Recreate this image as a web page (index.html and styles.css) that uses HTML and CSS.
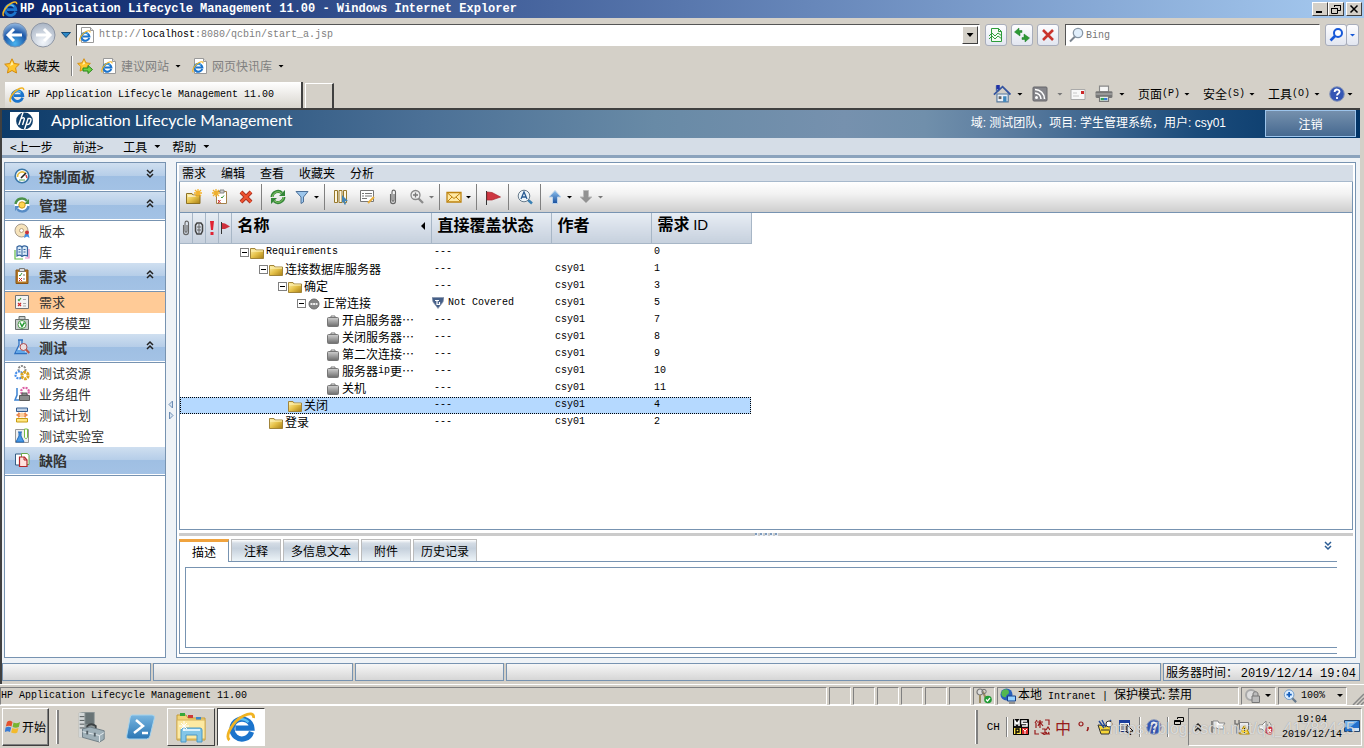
FILE: index.html
```html
<!DOCTYPE html>
<html lang="zh-CN">
<head>
<meta charset="utf-8">
<title>HP Application Lifecycle Management 11.00</title>
<link rel="stylesheet" href="styles.css">
</head>
<body>
<svg class="defs" aria-hidden="true">
  <defs>
    <linearGradient id="gFolder" x1="0" y1="0" x2="1" y2="1"><stop offset="0" stop-color="#fff3b0"/><stop offset=".5" stop-color="#e6c24a"/><stop offset="1" stop-color="#a87f14"/></linearGradient>
    <linearGradient id="gGrey" x1="0" y1="0" x2="0" y2="1"><stop offset="0" stop-color="#d0d0d0"/><stop offset="1" stop-color="#6c6c6c"/></linearGradient>
    <linearGradient id="gBlue" x1="0" y1="0" x2="0" y2="1"><stop offset="0" stop-color="#8fc3f0"/><stop offset="1" stop-color="#174e9c"/></linearGradient>
    <linearGradient id="gPs" x1="0" y1="0" x2="0" y2="1"><stop offset="0" stop-color="#79b6e0"/><stop offset="1" stop-color="#2a76b4"/></linearGradient>
    <radialGradient id="gBack" cx=".5" cy=".85" r=".8"><stop offset="0" stop-color="#4ab4f0"/><stop offset=".6" stop-color="#1d58a8"/><stop offset="1" stop-color="#88b0dc"/></radialGradient>
    <radialGradient id="gFwd" cx=".5" cy=".8" r=".8"><stop offset="0" stop-color="#f2f6fb"/><stop offset="1" stop-color="#a9b4c4"/></radialGradient>
    <symbol id="ie" viewBox="0 0 16 16"><path d="M13.6 10.6A5.3 5.3 0 1 1 13.8 8.6H5" fill="none" stroke="#1b74cc" stroke-width="2.8"/><path d="M4 6.5a4.800 4.800 0 0 1 8-1" fill="none" stroke="#5cc0f2" stroke-width="1.200"/><path d="M1.800 15C-.8 12.500 4 4.500 9.500 2c3-1.500 5.500-1.500 5.200 1.200" fill="none" stroke="#f0b323" stroke-width="1.500"/></symbol>
    <symbol id="iepage" viewBox="0 0 16 16"><path d="M2.500.5h9l3 3v12h-12z" fill="#fff" stroke="#9a9a9a"/><path d="M11.500.5v3h3" fill="#ddd" stroke="#9a9a9a"/><use href="#ie" x="0" y="3" width="12" height="12"/></symbol>
    <symbol id="star" viewBox="0 0 16 16"><path d="M8 .8l2.200 4.700 5.100.7-3.700 3.600.9 5.200L8 12.500 3.500 15l.9-5.200L.7 6.200l5.100-.7z" fill="#ffc62e" stroke="#d48a0c"/><path d="M8 3l1.300 3.500L6 8z" fill="#fff0a8"/></symbol>
    <symbol id="starplus" viewBox="0 0 16 16"><use href="#star" width="14" height="14"/><path d="M6 10h5V7.500l4.500 4-4.500 4V13H6z" fill="#6dcf45" stroke="#278a1a"/></symbol>
    <symbol id="compat" viewBox="0 0 16 16"><path d="M3.500 1.500h7l3 3v10h-10z" fill="#f3fbf3" stroke="#2d9c3a"/><path d="M10.500 1.500v3h3M1 9l3-3 3 3 3-3 4 3M1 12l3-3 3 3 3-3 4 3" fill="none" stroke="#2d9c3a"/></symbol>
    <symbol id="reload" viewBox="0 0 16 16"><path d="M.5 5L5 1v2.500h3v2H6V9zM15.500 11L11 15v-2.500H8v-2h2V7z" fill="#2d9a34" stroke="#1e7a28" stroke-width=".5"/></symbol>
    <symbol id="cross" viewBox="0 0 16 16"><path d="M3 3l10 10M13 3L3 13" stroke="#a83020" stroke-width="4"/><path d="M3 3l10 10M13 3L3 13" stroke="#ee5230" stroke-width="2.400"/></symbol>
    <symbol id="stop" viewBox="0 0 16 16"><path d="M3 3l10 10M13 3L3 13" stroke="#c9332c" stroke-width="2.600"/></symbol>
    <symbol id="mag" viewBox="0 0 16 16"><path d="M7 9.500L2 14.500" stroke="#7b8590" stroke-width="2"/><circle cx="10" cy="6" r="4.700" fill="#e1effc" stroke="#8796a5" stroke-width="1.300"/></symbol>
    <symbol id="magb" viewBox="0 0 16 16"><path d="M7 9L2.500 13.500" stroke="#1658d8" stroke-width="2.600"/><circle cx="10" cy="6" r="4" fill="#fff" stroke="#1658d8" stroke-width="2"/></symbol>
    <symbol id="home" viewBox="0 0 16 16"><path d="M3 1h2v4H3zM3.500 8h10v7h-10z" fill="#e9f0f8" stroke="#56799c"/><path d="M.8 8.500L8.500 1.500l7 7" fill="none" stroke="#3555a0" stroke-width="1.600"/><path d="M9 10h3v5H9z" fill="#3e87bc"/><path d="M5 10h2.500v2.500H5z" fill="#656565"/><path d="M3 0h3v4H3z" fill="#2131a8"/></symbol>
    <symbol id="rss" viewBox="0 0 16 16"><rect x="1" y="1" width="14" height="14" rx="1" fill="#85858a" stroke="#66666b"/><circle cx="4.500" cy="11.500" r="1.500" fill="#fff"/><path d="M3 7a6 6 0 0 1 6 6M3 3.500A9.500 9.500 0 0 1 12.500 13" fill="none" stroke="#fff" stroke-width="1.600"/></symbol>
    <symbol id="mailr" viewBox="0 0 16 16"><path d="M1 3.500h14v10H1z" fill="#f8f8f8" stroke="#aaa"/><path d="M11 5h3v3h-3z" fill="#cc2929"/><path d="M3 7h4M3 10h6" stroke="#c8c8c8"/></symbol>
    <symbol id="printer" viewBox="0 0 16 16"><path d="M4 1h8v5H4z" fill="#f6f6f6" stroke="#888"/><rect x=".5" y="5.500" width="15" height="6" rx="1" fill="#777"/><path d="M1 8h14" stroke="#b2b2b2"/><path d="M4 10h8v4.500H4z" fill="#eff7ef" stroke="#777"/><path d="M5 12.500h3" stroke="#32a05d" stroke-width="2"/><path d="M8 12.500h3" stroke="#3778d4" stroke-width="2"/></symbol>
    <symbol id="help" viewBox="0 0 16 16"><circle cx="8" cy="8" r="7.300" fill="#3456b4" stroke="#8796b8"/><path d="M5.600 6c.2-3.500 5-3 4.900-.3C10.400 7.500 8 7.400 8 9.600M8 11v2" fill="none" stroke="#fff" stroke-width="1.800"/></symbol>
    <symbol id="hp" viewBox="0 0 29 18"><path d="M0 0h29v18H0z" fill="#fff"/><circle cx="14.500" cy="9" r="8.400" fill="#0f3f6c"/><path d="M13 .5L8.800 13M11.200 6.500c2.300-1.200 3.600-.9 3 1L12.500 13M14.500 17.500l3.600-11h1.600c1.500 0 1.500 1 1 2.500-.8 2.500-1.200 3.500-4 3.500" fill="none" stroke="#fff" stroke-width="1.400"/></symbol>
    <symbol id="gauge" viewBox="0 0 16 16"><circle cx="8" cy="8" r="6.800" fill="#fff" stroke="#3977a8" stroke-width="1.600"/><path d="M3.500 9a4.600 4.600 0 0 1 8-3.500" fill="none" stroke="#e5bd40" stroke-width="1.600"/><path d="M7 10l5-5" stroke="#222" stroke-width="1.600"/><path d="M12 7l1 3" stroke="#cf3e3c" stroke-width="1.500"/><path d="M5 12h6" stroke="#56a757"/></symbol>
    <symbol id="manage" viewBox="0 0 16 16"><circle cx="8" cy="8" r="7.500" fill="#fff"/><path d="M1.500 7A6.500 6.500 0 0 1 13 4" fill="none" stroke="#4b914b" stroke-width="2.500"/><path d="M15 2v5h-5z" fill="#4b914b"/><path d="M14.500 9A6.500 6.500 0 0 1 3 12" fill="none" stroke="#568bc5" stroke-width="2.500"/><path d="M1 14V9h5z" fill="#568bc5"/><circle cx="8" cy="8" r="3.200" fill="#ffd552" stroke="#cc9a1d"/></symbol>
    <symbol id="disc" viewBox="0 0 16 16"><circle cx="7.500" cy="7.500" r="6.500" fill="#f6e3bb" stroke="#a79c8d"/><circle cx="7.500" cy="7.500" r="2" fill="#fff" stroke="#baa47e"/><path d="M11 11l-1 4 3-1.500 2.500 1.500-1-4z" fill="#3e8de5"/><circle cx="13" cy="9.500" r="2" fill="#c7333c"/></symbol>
    <symbol id="book" viewBox="0 0 16 16"><path d="M1 6v9h8" fill="none" stroke="#62bd47" stroke-width="1.200"/><path d="M15 5v9h-4" fill="none" stroke="#e58bc4" stroke-width="1.200"/><path d="M3 3c2-1.500 4-1 5 0 1-1 3-1.500 5.500 0v9c-2-1-4-1-5.500.5C6.500 11 4.500 11 3 12z" fill="#dcecf9" stroke="#33629d" stroke-width="1.200"/><path d="M8 3v9M4.500 5.500h2M4.500 8h2M9.500 5.500h2M9.500 8h2" stroke="#33629d"/></symbol>
    <symbol id="clipb" viewBox="0 0 16 16"><path d="M2 2h12v13.500H2z" fill="#b67924" stroke="#875519"/><path d="M4 4h8v9.500H4z" fill="#fff"/><path d="M5.500.5h5v3h-5z" fill="#ddd" stroke="#777"/><path d="M5 7l1 1 2-3" fill="none" stroke="#3d973a"/><path d="M5 10l3 3m0-3l-3 3" stroke="#cc2b2b"/><path d="M9 7h2M9 11h2" stroke="#777"/></symbol>
    <symbol id="reqs" viewBox="0 0 16 16"><path d="M1.500 1.500h13v13h-13z" fill="#f4f4f4" stroke="#737373"/><path d="M4 5.500l1 1 2-2.500" fill="none" stroke="#3d973a" stroke-width="1.200"/><path d="M4 9l3 3m0-3l-3 3" stroke="#cc2b2b" stroke-width="1.200"/><path d="M9 5.500h3M9 9.500h3M9 12h3" stroke="#aaa"/></symbol>
    <symbol id="bag" viewBox="0 0 16 16"><path d="M5 4V1.500h6V4M1.500 4.500h13v10h-13z" fill="#c8cdcb" stroke="#686f6c"/><circle cx="8" cy="9.500" r="4" fill="#fff" stroke="#4d9a4b"/><path d="M6 7.500l2 4 2.500-4" fill="none" stroke="#269a34" stroke-width="1.500"/></symbol>
    <symbol id="flaskm" viewBox="0 0 16 16"><path d="M4 1h5M5 1v5L1 14.500h12M8 1v4" fill="#d7e8fa" stroke="#2e70c0" stroke-width="1.300"/><path d="M3 11h7l2 3H2z" fill="#62a7e8"/><circle cx="9.500" cy="8" r="3.500" fill="#ebdedf" stroke="#b04c50"/><path d="M12 10.500l3.300 3.500" stroke="#bd5443" stroke-width="2"/></symbol>
    <symbol id="gears" viewBox="0 0 16 16"><circle cx="8" cy="4.500" r="3.500" fill="none" stroke="#888" stroke-width="2" stroke-dasharray="2 1"/><circle cx="5" cy="10" r="3.500" fill="#fff" stroke="#468eea" stroke-width="2.200" stroke-dasharray="2 1"/><circle cx="11" cy="10.500" r="3.200" fill="#fff" stroke="#dca521" stroke-width="3" stroke-dasharray="2.500 .8"/></symbol>
    <symbol id="comp" viewBox="0 0 16 16"><path d="M3 2v7L1 14h4" fill="none" stroke="#3b83d2" stroke-width="1.500"/><circle cx="11" cy="5.500" r="3.800" fill="#fff" stroke="#db5fa4" stroke-width="2.200" stroke-dasharray="2 1"/><path d="M8 9V7h5v2M5.500 9.500h10v5h-10z" fill="#8b8b8b" stroke="#5d5d5d"/></symbol>
    <symbol id="plan" viewBox="0 0 16 16"><path d="M2.500 1h11v3.500h-11z" fill="#bfd1e5" stroke="#355c8f"/><path d="M2.500 8h11M4 6l8 4M12 6l-8 4" stroke="#eb8b52" stroke-width="1.800"/><circle cx="8" cy="8" r="2.500" fill="#ffd0a0"/><path d="M2.500 11.500h11V15h-11z" fill="#ffe680" stroke="#c79c12"/></symbol>
    <symbol id="lab" viewBox="0 0 16 16"><path d="M1.500 1.500h13v13h-13z" fill="#eef0f1" stroke="#989898"/><path d="M4 4h4M5 4v4l-3 6h8L7 8V4" fill="#479be9" stroke="#2268b6"/><path d="M10.500 1h3v8c0 2-3 2-3 0z" fill="#fff" stroke="#76ba42"/></symbol>
    <symbol id="defect" viewBox="0 0 16 16"><path d="M1.500 2h7v11h-7z" fill="#fff" stroke="#335d83"/><path d="M7.500 1.500h6l1.500 2v9H7.500z" fill="#fff" stroke="#69a94a"/><path d="M5.500 5h5l2.500 3v6.500H5.500z" fill="#ffe3df" stroke="#b1262b" stroke-width="1.200"/><path d="M10 5v3h3" fill="none" stroke="#b1262b"/></symbol>
    <symbol id="folder" viewBox="0 0 14 12"><path d="M.5 11V1.500h4.500l1 1.500h7.500v8.500H.5z" fill="url(#gFolder)" stroke="#a18439"/><path d="M1 4h12" stroke="#fff5be"/></symbol>
    <symbol id="fnew" viewBox="0 0 16 16"><path d="M.5 14V4.500H6L7 6h7v8.500H.5z" fill="url(#gFolder)" stroke="#8d7123"/><path d="M2 7h8" stroke="#fff"/><path d="M12 0v8M8 4h8M9 1l6 6M15 1L9 7" stroke="#f3b32d" stroke-width="1.300"/></symbol>
    <symbol id="nnew" viewBox="0 0 16 16"><path d="M4.500 2.500h10v12h-10z" fill="#fff" stroke="#a38048"/><path d="M8 1h4v3H8z" fill="#ccc" stroke="#888"/><path d="M6 11l2.500 3m0-3L6 14" stroke="#cc2828"/><path d="M9 8l1 1 2-2.500" fill="none" stroke="#3a9636"/><path d="M4 0v8M0 4h8M1 1l6 6M7 1L1 7" stroke="#eeb02d" stroke-width="1.300"/></symbol>
    <symbol id="sync" viewBox="0 0 16 16"><path d="M2 8a6 6 0 0 1 10-4" fill="none" stroke="#338638" stroke-width="3"/><path d="M15 1v6H9z" fill="#338638"/><path d="M14 8a6 6 0 0 1-10 4" fill="none" stroke="#338638" stroke-width="3"/><path d="M1 15V9h6z" fill="#338638"/><path d="M2.400 8a5.600 5.600 0 0 1 9.200-4M13.600 8a5.600 5.600 0 0 1-9.200 4" fill="none" stroke="#8bc868"/></symbol>
    <symbol id="filter" viewBox="0 0 16 16"><path d="M2 2.500h12L9.500 8v5L7 14.500V8z" fill="#9cc6ec" stroke="#4d7098"/></symbol>
    <symbol id="cols" viewBox="0 0 16 16"><path d="M1.500 1.500h3v12h-3zM6 1.500h3v12H6zM10.500 1.500h3v12h-3z" fill="#fff7df" stroke="#96782c"/><path d="M9 6l6 6-3 .3 1 3-1.500.5-1-3-1.500 1z" fill="#4384b5"/></symbol>
    <symbol id="edit" viewBox="0 0 16 16"><path d="M1.500 1.500h13v11h-13z" fill="#fff" stroke="#777"/><path d="M3 4.500h2M6 4.500h7M3 7h2M6 7h7M3 9.500h5" stroke="#777"/><path d="M15 8l-6 6" stroke="#e9ae3c" stroke-width="2"/></symbol>
    <symbol id="clip" viewBox="0 0 16 16"><path d="M5.500 5v7c0 3.500 5 3.500 5 0V3c0-2.500-3.500-2.500-3.500 0v8c0 1.500 2 1.500 2 0V5" fill="none" stroke="#666" stroke-width="1.100"/></symbol>
    <symbol id="clip2" viewBox="0 0 12 16"><path d="M4 3h4l1.500 2v6L8 14H4l-1.500-3V5z" fill="none" stroke="#444" stroke-width="1.500"/><path d="M6 4v9M4 7h4M4 10h4" stroke="#666"/></symbol>
    <symbol id="zoomin" viewBox="0 0 16 16"><path d="M9 9l5 5" stroke="#8b8b8b" stroke-width="2.300"/><circle cx="6.500" cy="6" r="4.500" fill="#eee" stroke="#888" stroke-width="1.300"/><path d="M4 6h5M6.500 3.500v5" stroke="#777" stroke-width="1.300"/></symbol>
    <symbol id="mail" viewBox="0 0 16 16"><path d="M1 3.500h14v9.500H1z" fill="#ffe9a4" stroke="#bd830f" stroke-width="1.300"/><path d="M1.500 4L8 9.500 14.500 4M1.500 12.500L6 8M14.500 12.500L10 8" fill="none" stroke="#bd830f"/></symbol>
    <symbol id="flag" viewBox="0 0 16 16"><path d="M1.500 2v14" stroke="#333"/><path d="M2 3l5 .5L15.500 8 7 11H2z" fill="#ce3742" stroke="#a9282f" stroke-width=".7"/></symbol>
    <symbol id="find" viewBox="0 0 16 16"><path d="M10 10l5 4.500" stroke="#3980b4" stroke-width="2.500"/><circle cx="7" cy="7" r="5.800" fill="#edf5fa" stroke="#677a8b"/><path d="M4 10l3-7 3 7M5 8h4" fill="none" stroke="#285c94" stroke-width="1.300"/></symbol>
    <symbol id="up" viewBox="0 0 16 16"><path d="M8 1.500L2 8h3.500v6.500h5V8H14z" fill="url(#gBlue)" stroke="#bad1e9"/></symbol>
    <symbol id="down" viewBox="0 0 16 16"><path d="M8 14L2 8h3.500V1.500h5V8H14z" fill="#929292" stroke="#bbb"/></symbol>
    <symbol id="case" viewBox="0 0 12 12"><path d="M4 3V1h4v2" fill="none" stroke="#777"/><rect x=".5" y="2.500" width="11" height="9" rx="1" fill="url(#gGrey)" stroke="#767676"/></symbol>
    <symbol id="ball" viewBox="0 0 12 12"><circle cx="6" cy="6" r="5" fill="#858585" stroke="#6c6c6c"/><path d="M2.500 6h7" stroke="#eee" stroke-width="2" stroke-dasharray="2 .6"/></symbol>
    <symbol id="shield" viewBox="0 0 12 12"><path d="M0 .5h12L11 5 6 11.500 1 5z" fill="#455f88" stroke="#8693aa" stroke-width=".7"/><path d="M3 3.500h4M5 3v4.500h2.500V5" fill="none" stroke="#fff" stroke-width="1.200"/></symbol>
    <symbol id="chev" viewBox="0 0 8 10"><path d="M1 1l3 3 3-3M1 5l3 3 3-3" fill="none" stroke="currentColor" stroke-width="1.500"/></symbol>
    <symbol id="keys" viewBox="0 0 16 16"><circle cx="4" cy="4" r="3" fill="#ddd" stroke="#777" stroke-width="1.200"/><path d="M4 7v8M7 4l4 9" stroke="#9b8c60" stroke-width="2"/><circle cx="8" cy="3.500" r="2.200" fill="none" stroke="#777"/><circle cx="12" cy="11.500" r="3.800" fill="#219c35"/><path d="M10 11.500l1.500 1.500 2.500-3" fill="none" stroke="#fff" stroke-width="1.200"/></symbol>
    <symbol id="globe" viewBox="0 0 16 16"><circle cx="6.500" cy="6.500" r="6" fill="#2860bc"/><path d="M2 3c3-3 7-2 7 1s-3 2-3 5c-3 1-6-2-4-6z" fill="#53b850"/><path d="M7.500 8h8v5h-8z" fill="#94d0ff" stroke="#173f87"/><path d="M9 15h6" stroke="#555"/></symbol>
    <symbol id="lock" viewBox="0 0 16 16"><circle cx="6" cy="7" r="5" fill="#ddd" stroke="#aaa" stroke-width="2"/><path d="M8 8V6c0-3 5-3 5 0v2M7 8h7.500v6.500H7z" fill="#bbb" stroke="#777"/></symbol>
    <symbol id="magplus" viewBox="0 0 16 16"><path d="M10 10l5 5" stroke="#66798d" stroke-width="2.500"/><circle cx="7" cy="6.500" r="5.500" fill="#dceeff" stroke="#6694c4"/><path d="M4 6.500h6M7 3.500v6" stroke="#145ebc" stroke-width="2"/></symbol>
    <symbol id="win" viewBox="0 0 16 16"><path d="M2 3c2-2 4-1 5.500 0L6.500 7.500C5 6.500 3 6.500.800 7.500z" fill="#e3512d"/><path d="M8.500 3.500c2 1 4 1 6.500-.5l-1.200 5c-2 1-4 1-6.200 0z" fill="#76b52f"/><path d="M.6 8.500c2-1 4-1 5.600 0L5 13c-1.500-1-3.500-1-5.200 0z" fill="#397bd2"/><path d="M7.300 9c2 1 4 1 6.200 0l-1.200 4.500c-2 1.200-4 1-6.200 0z" fill="#f3ba2c"/></symbol>
    <symbol id="server" viewBox="0 0 32 34"><path d="M3 2l4-1h13v27H3z" fill="#8e9798"/><path d="M3 2h6v26H3z" fill="#d2d6d7"/><path d="M4 6h5M4 10h5M4 14h5M4 18h5" stroke="#4b5152"/><path d="M10 2h9v12h-9z" fill="#697476"/><path d="M12 20v-4q4-4 9 0v3" fill="none" stroke="#3d4244" stroke-width="2"/><path d="M7 19l8-2 15 4v9l-5 3-18-5z" fill="#9fb0b8" stroke="#6d7c84"/><path d="M7 22l18 4 5-3M25 26v7" fill="none" stroke="#e6edf0"/><path d="M12 21v4M20 23v4" stroke="#525e65" stroke-width="2"/></symbol>
    <symbol id="ps" viewBox="0 0 30 26"><path d="M6 1h20q3 0 2.400 3L24 22q-.7 3-3.500 3H3q-3 0-2.300-3L4 4q.5-3 2-3z" fill="url(#gPs)" stroke="#a8d4ed"/><path d="M10 6l7 6-9 7M16 19h6" fill="none" stroke="#fff" stroke-width="2.500"/></symbol>
    <symbol id="explorer" viewBox="0 0 34 32"><path d="M3 4h9l2 3h17v22H3z" fill="#f1d477" stroke="#c49b38"/><path d="M6 2h5v3H6z" fill="#35a837"/><path d="M14 4h5v3h-5z" fill="#cc3838"/><path d="M22 6h5v3h-5z" fill="#3889cc"/><path d="M3 9h28v19H3z" fill="#fce9a2" stroke="#d5b15a"/><path d="M7 31V19q0-2 2-2h17q2 0 2 2v12h-5v-7H12v7z" fill="#83c6e8" stroke="#4a98c5"/><path d="M9 19h17" stroke="#d7f1fe" stroke-width="2"/><path d="M10 10v10M5 15h10M7 12l6 6M13 12l-6 6" stroke="#fff"/></symbol>
    <symbol id="mspy" viewBox="0 0 16 16"><path d="M.5.5h15v15H.5z" fill="#111" stroke="#000"/><path d="M2 7V2l2 3 2-3v5M14 2H9v2.500h5V7H9" fill="none" stroke="#fff" stroke-width="1.500"/><path d="M1 9h7v6H1z" fill="#ffe34b"/><path d="M3 15v-5h3v3H3" fill="none" stroke="#000" stroke-width="1.300"/><path d="M9 9h6v6H9z" fill="#dd2c2c"/><path d="M10 10l2 2 2-2M12 12v3" fill="none" stroke="#fff"/></symbol>
    <symbol id="exper" viewBox="0 0 16 16"><path d="M3 1L1 4M2 4v5M3 3h6M6 1v8M6 3L4 7M6 3l3 4M11 1h4v5M1 11v4h4M8 10h3v4H8l3 2M12 11l2-3 2 3M12 13l1 2m2-2l-1 2m-3 0h5" fill="none" stroke="#971b1b" stroke-width="1.200"/></symbol>
    <symbol id="pens" viewBox="0 0 16 16"><path d="M1 6l3 9h8l2-8z" fill="#f6d638" stroke="#333"/><path d="M2 2l5 7M5 1l3 6M14 1L8 8" stroke="#234a9a" stroke-width="1.400"/><circle cx="12" cy="5" r="3" fill="#fff" stroke="#333"/><path d="M4 11h8" stroke="#333"/></symbol>
    <symbol id="menuic" viewBox="0 0 16 16"><path d="M1.500 2.500h10v10h-10z" fill="#fff" stroke="#14286c"/><path d="M1 1h11v3H1z" fill="#1b3d9e"/><path d="M3 6h7M3 8h7M3 10h7" stroke="#334"/><path d="M9 6l6 6-3 .3 1 3-1.500.500-1-3-1.500 1z" fill="#fff" stroke="#000"/></symbol>
    <symbol id="tflag" viewBox="0 0 16 16"><path d="M2 2v13" stroke="#6d6d6d" stroke-width="1.500"/><path d="M3 2h5l1 2h6l-2 3 1 3H8L7 9H3z" fill="#fff" stroke="#888"/></symbol>
    <symbol id="net" viewBox="0 0 16 16"><path d="M1 1v4h4V1M3 5v9h4" fill="none" stroke="#666" stroke-width="1.200"/><path d="M5.500 3.500h9v7h-9z" fill="#eee" stroke="#777"/><path d="M10.500 6l5 9h-10z" fill="#ffd62b" stroke="#ad8504"/><path d="M10.500 9v3M10.500 13v1" stroke="#222"/></symbol>
    <symbol id="mute" viewBox="0 0 16 16"><path d="M1 6h3l4-4v12l-4-4H1zM9 5q2 2 0 5M11 3q4 4 1 8" fill="#fff" stroke="#888"/><circle cx="11.500" cy="11.500" r="4" fill="#d62e2c"/><path d="M10 10l3 3m0-3l-3 3" stroke="#fff" stroke-width="1.300"/></symbol>
    <symbol id="desk" viewBox="0 0 16 14"><path d="M.500.500h15v11H.5z" fill="#2370cc" stroke="#24466f"/><path d="M1 1h13L5 8 1 7z" fill="#74b5ee"/><path d="M8 8h7v3H8z" fill="#cfe4f7"/></symbol>
  </defs>
</svg>

<header class="titlebar">
  <svg class="i16"><use href="#ie"/></svg>
  <h1 class="lat">HP Application Lifecycle Management 11.00 - Windows Internet Explorer</h1>
  <div class="winbtns">
    <button class="wbtn" aria-label="最小化"><svg viewBox="0 0 12 10"><path d="M2 8h6" stroke="#000" stroke-width="2"/></svg></button>
    <button class="wbtn" aria-label="还原"><svg viewBox="0 0 12 10"><path d="M4.500 3V1.500h6v5H8M4 1.500h7M1.500 4.500h6v5h-6zM1 4.500h7" fill="none" stroke="#000"/></svg></button>
    <button class="wbtn closeb" aria-label="关闭"><svg viewBox="0 0 12 10"><path d="M2.500 1.500l7 7M9.500 1.500l-7 7" stroke="#000" stroke-width="1.500"/></svg></button>
  </div>
</header>

<div class="navrow">
  <div class="travel">
    <button class="round" aria-label="后退"><svg viewBox="0 0 26 26"><circle cx="13" cy="13" r="12" fill="url(#gBack)" stroke="#7f91ab"/><path d="M20 13H7M12 7l-6 6 6 6" fill="none" stroke="#fff" stroke-width="3"/></svg></button>
    <button class="round" aria-label="前进"><svg viewBox="0 0 26 26"><circle cx="13" cy="13" r="12" fill="url(#gFwd)" stroke="#8e96a4"/><path d="M6 13h13M14 7l6 6-6 6" fill="none" stroke="#fff" stroke-width="3"/></svg></button>
    <button class="hist" aria-label="最近的页面"><svg viewBox="0 0 10 6"><path d="M.5.500h9L5 5.500z" fill="#2b87c6" stroke="#164b76"/></svg></button>
  </div>
  <div class="address">
    <svg class="i16"><use href="#iepage"/></svg>
    <div class="url lat" role="textbox" aria-label="地址" contenteditable="true">http://<b>localhost</b>:8080/qcbin/start_a.jsp</div>
    <button class="wbtn dropb" aria-label="显示地址列表"><i class="caret"></i></button>
  </div>
  <button class="soft" aria-label="兼容性视图"><svg class="i16"><use href="#compat"/></svg></button>
  <button class="soft" aria-label="刷新"><svg class="i16"><use href="#reload"/></svg></button>
  <button class="soft" aria-label="停止"><svg class="i16"><use href="#stop"/></svg></button>
  <div class="search">
    <svg class="i16"><use href="#mag"/></svg>
    <input class="lat" type="text" placeholder="Bing" aria-label="Bing">
  </div>
  <div class="gosearch">
    <button class="soft" aria-label="搜索"><svg class="i16"><use href="#magb"/></svg></button><button class="soft thin" aria-label="搜索选项"><i class="caret blue"></i></button>
  </div>
</div>

<nav class="favrow">
  <button class="flat fav"><svg class="i16"><use href="#star"/></svg>收藏夹</button>
  <i class="groove"></i>
  <button class="flat" aria-label="添加到收藏夹栏"><svg class="i16"><use href="#starplus"/></svg></button>
  <button class="flat dim"><svg class="i16"><use href="#iepage"/></svg>建议网站<i class="caret"></i></button>
  <button class="flat dim"><svg class="i16"><use href="#iepage"/></svg>网页快讯库<i class="caret"></i></button>
</nav>

<div class="tabrow">
  <button class="btab lat"><svg class="i16"><use href="#ie"/></svg>HP Application Lifecycle Management 11.00</button>
  <button class="btab blank" aria-label="新选项卡"></button>
  <div class="cmds">
    <button class="flat" aria-label="主页"><svg class="i18"><use href="#home"/></svg><i class="caret"></i></button>
    <button class="flat" aria-label="源"><svg class="i16"><use href="#rss"/></svg></button>
    <button class="flat tight" aria-label="阅读邮件"><i class="caret grey"></i><svg class="i16"><use href="#mailr"/></svg></button>
    <button class="flat" aria-label="打印"><svg class="i18"><use href="#printer"/></svg><i class="caret"></i></button>
    <button class="flat word">页面<span class="lat">(P)</span><i class="caret"></i></button>
    <button class="flat word">安全<span class="lat">(S)</span><i class="caret"></i></button>
    <button class="flat word">工具<span class="lat">(O)</span><i class="caret"></i></button>
    <button class="flat helpb" aria-label="帮助"><svg class="i16"><use href="#help"/></svg><i class="caret"></i></button>
  </div>
</div>

<div class="app">
  <header class="brand">
    <svg class="hplogo"><use href="#hp"/></svg>
    <div class="product">Application Lifecycle Management</div>
    <div class="who">域: 测试团队，项目: 学生管理系统，用户: csy01</div>
    <button class="logout">注销</button>
  </header>
  <nav class="appmenu">
    <button class="flat step">&lt;上一步</button>
    <button class="flat step">前进&gt;</button>
    <button class="flat">工具<i class="caret"></i></button>
    <button class="flat">帮助<i class="caret"></i></button>
  </nav>

  <div class="work">
    <nav class="side">
      <button class="group"><svg class="i16"><use href="#gauge"/></svg>控制面板<svg class="chev"><use href="#chev"/></svg></button>
      <button class="group"><svg class="i16"><use href="#manage"/></svg>管理<svg class="chev open"><use href="#chev"/></svg></button>
      <a class="item" href="#"><svg class="i16"><use href="#disc"/></svg>版本</a>
      <a class="item" href="#"><svg class="i16"><use href="#book"/></svg>库</a>
      <button class="group"><svg class="i16"><use href="#clipb"/></svg>需求<svg class="chev open"><use href="#chev"/></svg></button>
      <a class="item on" href="#"><svg class="i16"><use href="#reqs"/></svg>需求</a>
      <a class="item" href="#"><svg class="i16"><use href="#bag"/></svg>业务模型</a>
      <button class="group"><svg class="i16"><use href="#flaskm"/></svg>测试<svg class="chev open"><use href="#chev"/></svg></button>
      <a class="item" href="#"><svg class="i16"><use href="#gears"/></svg>测试资源</a>
      <a class="item" href="#"><svg class="i16"><use href="#comp"/></svg>业务组件</a>
      <a class="item" href="#"><svg class="i16"><use href="#plan"/></svg>测试计划</a>
      <a class="item" href="#"><svg class="i16"><use href="#lab"/></svg>测试实验室</a>
      <button class="group"><svg class="i16"><use href="#defect"/></svg>缺陷</button>
    </nav>
    <div class="vsplit">
      <svg viewBox="0 0 6 20"><path d="M4.500 1v7L1 4.500zM1.500 12v7L5 15.500z" fill="#d5e3f1" stroke="#6d8db4"/></svg>
    </div>

    <main class="main">
      <div class="modmenu">
        <button class="flat">需求</button><button class="flat">编辑</button><button class="flat">查看</button><button class="flat">收藏夹</button><button class="flat">分析</button>
      </div>
      <div class="grid">
        <div class="toolbar">
          <button class="tb" aria-label="新建文件夹"><svg class="i16"><use href="#fnew"/></svg></button>
          <button class="tb" aria-label="新建需求"><svg class="i16"><use href="#nnew"/></svg></button>
          <button class="tb" aria-label="删除"><svg class="i16"><use href="#cross"/></svg></button>
          <i class="sep"></i>
          <button class="tb" aria-label="刷新全部"><svg class="i16"><use href="#sync"/></svg></button>
          <button class="tb drop" aria-label="筛选"><svg class="i16"><use href="#filter"/></svg><i class="caret"></i></button>
          <i class="sep"></i>
          <button class="tb" aria-label="选择列"><svg class="i16"><use href="#cols"/></svg></button>
          <button class="tb" aria-label="详细信息"><svg class="i16"><use href="#edit"/></svg></button>
          <button class="tb" aria-label="附件"><svg class="i16"><use href="#clip"/></svg></button>
          <button class="tb drop" aria-label="缩放"><svg class="i16"><use href="#zoomin"/></svg><i class="caret grey"></i></button>
          <i class="sep"></i>
          <button class="tb drop" aria-label="电子邮件"><svg class="i16"><use href="#mail"/></svg><i class="caret"></i></button>
          <i class="sep"></i>
          <button class="tb" aria-label="后续标记"><svg class="i16"><use href="#flag"/></svg></button>
          <i class="sep"></i>
          <button class="tb" aria-label="查找"><svg class="i16"><use href="#find"/></svg></button>
          <i class="sep"></i>
          <button class="tb drop" aria-label="上移"><svg class="i16"><use href="#up"/></svg><i class="caret"></i></button>
          <button class="tb drop" aria-label="下移"><svg class="i16"><use href="#down"/></svg><i class="caret grey"></i></button>
        </div>
        <table class="tree">
          <colgroup><col class="c1"><col class="cs"><col class="cs"><col class="cs"><col class="cname"><col class="ccov"><col class="cfld"><col class="cfld"></colgroup>
          <thead><tr>
            <th class="mk" aria-label="附件"><svg viewBox="3 0 10 16"><use href="#clip" width="16" height="16"/></svg></th>
            <th class="mk" aria-label="链接"><svg viewBox="1 0 10 16"><use href="#clip2" width="12" height="16"/></svg></th>
            <th class="mk" aria-label="警告"><svg viewBox="0 0 10 16"><path d="M3 1h4l-1 9H4zM3.500 12h3v3h-3z" fill="#e02333"/></svg></th>
            <th class="mk" aria-label="标记"><svg viewBox="0 0 10 16"><path d="M1.500 2v12" stroke="#333"/><path d="M2 3l3 .5L10 6.500 5 9H2z" fill="#ce2f3b"/></svg></th>
            <th><div class="thn">名称<svg viewBox="0 0 4 8"><path d="M4 0v8L0 4z"/></svg></div></th>
            <th>直接覆盖状态</th><th>作者</th><th>需求 <span class="sans">ID</span></th>
          </tr></thead>
          <tbody>
            <tr><td colspan="4"></td><td><div class="node lv0"><i class="tg"></i><svg class="fo"><use href="#folder"/></svg><span class="lat">Requirements</span></div></td><td class="lat">---</td><td></td><td class="lat">0</td></tr>
            <tr><td colspan="4"></td><td><div class="node lv1"><i class="tg"></i><svg class="fo"><use href="#folder"/></svg>连接数据库服务器</div></td><td class="lat">---</td><td class="lat">csy01</td><td class="lat">1</td></tr>
            <tr><td colspan="4"></td><td><div class="node lv2"><i class="tg"></i><svg class="fo"><use href="#folder"/></svg>确定</div></td><td class="lat">---</td><td class="lat">csy01</td><td class="lat">3</td></tr>
            <tr><td colspan="4"></td><td><div class="node lv3"><i class="tg"></i><svg class="fo"><use href="#ball"/></svg>正常连接</div></td><td class="lat"><div class="cov"><svg><use href="#shield"/></svg>Not Covered</div></td><td class="lat">csy01</td><td class="lat">5</td></tr>
            <tr><td colspan="4"></td><td><div class="node lv4"><i class="tg no"></i><svg class="fo"><use href="#case"/></svg>开启服务器⋯</div></td><td class="lat">---</td><td class="lat">csy01</td><td class="lat">7</td></tr>
            <tr><td colspan="4"></td><td><div class="node lv4"><i class="tg no"></i><svg class="fo"><use href="#case"/></svg>关闭服务器⋯</div></td><td class="lat">---</td><td class="lat">csy01</td><td class="lat">8</td></tr>
            <tr><td colspan="4"></td><td><div class="node lv4"><i class="tg no"></i><svg class="fo"><use href="#case"/></svg>第二次连接⋯</div></td><td class="lat">---</td><td class="lat">csy01</td><td class="lat">9</td></tr>
            <tr><td colspan="4"></td><td><div class="node lv4"><i class="tg no"></i><svg class="fo"><use href="#case"/></svg>服务器<span class="lat">ip</span>更⋯</div></td><td class="lat">---</td><td class="lat">csy01</td><td class="lat">10</td></tr>
            <tr><td colspan="4"></td><td><div class="node lv4"><i class="tg no"></i><svg class="fo"><use href="#case"/></svg>关机</div></td><td class="lat">---</td><td class="lat">csy01</td><td class="lat">11</td></tr>
            <tr class="sel"><td colspan="4"></td><td><div class="node lv2"><i class="tg no"></i><svg class="fo"><use href="#folder"/></svg>关闭</div></td><td class="lat">---</td><td class="lat">csy01</td><td class="lat">4</td></tr>
            <tr><td colspan="4"></td><td><div class="node lv1"><i class="tg no"></i><svg class="fo"><use href="#folder"/></svg>登录</div></td><td class="lat">---</td><td class="lat">csy01</td><td class="lat">2</td></tr>
          </tbody>
        </table>
      </div>
      <div class="hsplit"><i></i><i></i><i></i><i></i><i></i></div>
      <div class="detail">
        <div class="dtabs">
          <button class="dtab on">描述</button><button class="dtab">注释</button><button class="dtab wide">多信息文本</button><button class="dtab">附件</button><button class="dtab wide">历史记录</button>
          <svg class="chev more"><use href="#chev"/></svg>
        </div>
        <div class="pane"><div class="desc" role="textbox" aria-label="描述" contenteditable="true"></div></div>
      </div>
    </main>
  </div>

  <footer class="appstatus">
    <div class="st a"></div><div class="st b"></div><div class="st a"></div><div class="st fill"></div>
    <div class="st">服务器时间： <span class="lat">2019/12/14 19:04</span></div>
  </footer>
</div>

<footer class="iestatus">
  <div class="cell grow lat">HP Application Lifecycle Management 11.00</div>
  <div class="cell sm"></div><div class="cell sm"></div><div class="cell sm"></div><div class="cell sm"></div><div class="cell sm"></div><div class="cell sm"></div>
  <div class="cell sm"><svg class="i16"><use href="#keys"/></svg></div>
  <div class="cell zone"><svg class="i16"><use href="#globe"/></svg><span>本地<span class="lat"> Intranet | </span>保护模式: 禁用</span></div>
  <div class="cell lk"><svg class="i16"><use href="#lock"/></svg><i class="caret"></i></div>
  <div class="cell zm"><svg class="i14"><use href="#magplus"/></svg><span class="lat">100%</span><i class="caret"></i></div>
  <svg class="grip" viewBox="0 0 12 12"><path d="M1 12L12 1M5 12l7-7M9 12l3-3" stroke="#888" stroke-width="1.500"/></svg>
</footer>

<div class="taskbar">
  <button class="start"><svg class="i16"><use href="#win"/></svg>开始</button>
  <i class="groove tall"></i>
  <button class="task" aria-label="服务器管理器"><svg class="big"><use href="#server"/></svg></button>
  <button class="task" aria-label="Windows PowerShell"><svg class="med"><use href="#ps"/></svg></button>
  <button class="task raised" aria-label="资源管理器"><svg class="big"><use href="#explorer"/></svg></button>
  <button class="task active" aria-label="Internet Explorer"><svg class="i30"><use href="#ie"/></svg></button>
  <div class="ime">
    <i class="groove tall"></i>
    <span class="lat ch">CH</span>
    <i class="groove"></i>
    <svg class="i16"><use href="#mspy"/></svg>
    <svg class="i16"><use href="#exper"/></svg>
    <span class="zh">中</span>
    <svg class="i16" viewBox="0 0 16 16"><circle cx="5" cy="5" r="2" fill="none" stroke="#971b1b" stroke-width="1.200"/><path d="M12 8v2l-1 2" fill="none" stroke="#971b1b" stroke-width="1.600"/></svg>
    <svg class="i16"><use href="#pens"/></svg>
    <svg class="i16"><use href="#menuic"/></svg>
    <i class="groove"></i>
    <svg class="i16"><use href="#help"/></svg>
    <i class="groove"></i>
    <svg class="rest" viewBox="0 0 10 10"><path d="M3.500 3V1.500h6v4H7M.5 4.500h6v4h-6zM.5 5.500h6" fill="none" stroke="#000"/></svg>
  </div>
  <div class="tray">
    <svg class="chev open"><use href="#chev"/></svg>
    <svg class="i16"><use href="#tflag"/></svg>
    <svg class="i16"><use href="#net"/></svg>
    <svg class="i16"><use href="#mute"/></svg>
    <div class="clock lat"><div>19:04</div><div>2019/12/14</div></div>
    <svg class="desk"><use href="#desk"/></svg>
  </div>
  <div class="mark">https://blog.csdn.net/qq_41782425</div>
</div>
</body>
</html>
```

FILE: styles.css
```css
* { box-sizing: border-box; }
body {
  margin: 0;
  min-height: 100vh;
  display: flex;
  flex-direction: column;
  background: #d4d0c8;
  color: #000;
  font: 12px/16px "Noto Sans CJK SC", "Liberation Sans", sans-serif;
  white-space: nowrap;
}
button { font: inherit; color: inherit; margin: 0; padding: 0; border: 0; background: none; }
svg { display: block; flex: none; }
.defs { position: absolute; width: 0; height: 0; }
.lat { font-family: "Liberation Mono", monospace; font-size: 10px; }
.sans { font-family: "Liberation Sans", sans-serif; }
.i14 { width: 14px; height: 14px; }
.i16 { width: 16px; height: 16px; }
.i18 { width: 18px; height: 18px; }
.i30 { width: 30px; height: 30px; }
.caret { flex: none; width: 6px; height: 3px; background: #000; clip-path: polygon(0 0, 100% 0, 50% 100%); }
.caret.grey { background: #777; }
.caret.blue { background: #1658d8; }
.flat { display: flex; align-items: center; }
.groove { flex: none; width: 2px; height: 20px; background: #fff; border-left: 1px solid #808080; }
.groove.tall { width: 3px; height: 34px; border-left-color: #fff; border-right: 2px solid #808080; }

/* Browser window */
.titlebar { display: flex; align-items: center; height: 18px; padding: 0 2px; background: linear-gradient(90deg, #0a246a, #a6caf0); }
.titlebar h1 { flex: 1; margin: 0 0 0 2px; color: #fff; font-size: 12px; font-weight: bold; line-height: 16px; }
.winbtns { display: flex; }
.wbtn { display: flex; align-items: center; justify-content: center; width: 16px; height: 14px; background: #d4d0c8; border: 1px solid; border-color: #fff #404040 #404040 #fff; }
.wbtn svg { width: 12px; height: 10px; }
.wbtn.closeb { margin-left: 2px; }
.navrow { display: flex; align-items: center; height: 34px; padding: 0 5px 0 2px; gap: 4px; }
.travel { display: flex; align-items: center; margin-right: 1px; }
.round svg { width: 26px; height: 26px; }
.round + .round { margin-left: 2px; }
.hist { margin-left: 5px; }
.hist svg { width: 10px; height: 6px; }
.address, .search { display: flex; align-items: center; height: 22px; background: #fff; border: 1px solid; border-color: #555 #fff #fff #555; }
.address { flex: 1; padding-left: 2px; }
.url { flex: 1; margin-left: 4px; color: #808080; outline: 0; }
.url b { color: #000; font-weight: normal; }
.wbtn.dropb { height: 18px; margin-right: 1px; }
.wbtn .caret { width: 7px; height: 4px; }
.soft { display: flex; align-items: center; justify-content: center; width: 22px; height: 22px; background: linear-gradient(#fdfdff, #e2e6f0); border: 1px solid #a8adbb; border-radius: 3px; }
.address + .soft { margin-left: 1px; }
.search { width: 255px; margin-left: 2px; padding-left: 2px; }
.search input { flex: 1; min-width: 0; margin-left: 2px; padding: 0; border: 0; outline: 0; background: none; }
.search input::placeholder { color: #777; opacity: 1; }
.gosearch { display: flex; margin-left: 1px; }
.soft.thin { width: 13px; margin-left: -1px; }
.favrow { display: flex; align-items: center; height: 28px; padding-left: 4px; }
.favrow .flat { gap: 4px; margin-right: 11px; }
.favrow .groove { margin-right: 4px; }
.favrow .groove + .flat { margin-right: 8px; }
.favrow .dim { color: #808080; }
.favrow .caret { margin-left: 2px; }
.tabrow { display: flex; align-items: flex-end; height: 28px; padding-left: 5px; }
.btab { display: flex; align-items: center; gap: 3px; width: 298px; height: 26px; padding-left: 4px; background: linear-gradient(#fff, #d8d5ce); border-right: 2px solid #404040; }
.btab.blank { width: 29px; height: 25px; margin-left: 2px; background: #d4d0c8; border: 1px solid #fff; border-right: 2px solid #404040; border-bottom: 0; }
.cmds { flex: 1; display: flex; justify-content: flex-end; align-items: center; height: 28px; padding-right: 11px; gap: 9px; }
.cmds .flat { gap: 6px; }
.cmds .word { gap: 0; margin-left: 4px; }
.cmds .word .caret { margin-left: 4px; }
.cmds .helpb { gap: 2px; }
.cmds .tight { gap: 7px; }

/* Application frame */
.app { flex: 1; display: flex; flex-direction: column; margin-right: 4px; background: #eff3f7; border: 2px solid #404040; border-width: 2px 0 0 2px; }
.brand { display: flex; height: 28px; padding: 0 4px 0 8px; color: #fff; background: linear-gradient(90deg, #0d3b69 0, #4b7096 31%, #688aa6 48%, #7691ae 62%, #708fab 68%, #5c7da0 74%, #1b4b7a 88%, #003366 100%); }
.hplogo { width: 29px; height: 18px; margin-top: 2px; }
.product { flex: 1; margin-left: 12px; font: 16px/20px Lato, sans-serif; }
.who { margin-right: 39px; font-family: "Liberation Sans", "Noto Sans CJK SC", sans-serif; line-height: 26px; }
.logout { width: 91px; height: 27px; background: linear-gradient(#7590ad, #466990); border: 1px solid #9cc4ec; line-height: 22px; }
.appmenu { display: flex; height: 20px; padding-left: 8px; gap: 12px; background: #d5dde7; border-bottom: 3px solid #8ba3bd; }
.appmenu .flat { gap: 7px; }
.appmenu .step { margin-right: 8px; }
.work { flex: 1; display: flex; padding: 4px 4px 5px 2px; }
.side { width: 162px; background: #fff; border: 1px solid #7793b1; color: #333; }
.group { display: flex; align-items: center; width: 100%; height: 29px; padding: 0 11px 2px 9px; background: linear-gradient(#cfdff0, #b5cde8 49%, #9fbfe3 50%, #a3c2e5); background-size: 100% 27px; background-repeat: no-repeat; border-bottom: 1px solid #7793b1; font-size: 14px; font-weight: bold; line-height: 20px; text-align: left; }
.group .i16, .item .i16 { margin-right: 9px; }
.chev { width: 8px; height: 10px; margin-left: auto; color: #222; }
.group .chev { margin-bottom: 4px; }
.chev.open { transform: rotate(180deg); }
.item { display: flex; align-items: center; height: 21px; padding: 0 0 2px 9px; color: #333; font-size: 13px; text-decoration: none; }
.item.on { background: #ffcb97; }
.vsplit { display: flex; align-items: center; width: 10px; padding-left: 2px; }
.vsplit svg { width: 6px; height: 20px; }
.main { flex: 1; min-width: 0; display: flex; flex-direction: column; padding: 2px; background: #fff; border: 1px solid #7793b1; }
.modmenu { display: flex; height: 17px; padding-left: 3px; gap: 15px; background: #d5dde7; border-bottom: 1px solid #a7b9cc; }
.grid { flex: 1; border: 1px solid #7793b1; border-top: 0; }
.toolbar { display: flex; align-items: center; height: 31px; padding-left: 1px; background: linear-gradient(#fff, #f2f2f2 40%, #cecece); border-bottom: 1px solid #7793b1; }
.tb { display: flex; align-items: center; justify-content: center; width: 26px; height: 26px; }
.tb.drop { width: 31px; gap: 4px; }
.sep { width: 1px; height: 26px; margin: 0 3px 0 2px; background: #808080; }
.tree { border-collapse: collapse; table-layout: fixed; width: 571px; }
.c1 { width: 12px; }
.cs { width: 13px; }
.cname { width: 200px; }
.ccov { width: 120px; }
.cfld { width: 100px; }
.tree th { height: 28px; padding: 0 0 8px 6px; background: linear-gradient(#e7edf4, #c6d0dd); border: 1px solid #a7b6c6; border-top: 0; border-left: 0; font-size: 16px; line-height: 20px; font-weight: bold; text-align: left; }
.tree th .sans { font-weight: normal; font-size: 15px; }
.tree th.mk { padding: 0 1px; vertical-align: middle; }
.mk svg { width: 10px; height: 16px; }
.thn { display: flex; align-items: center; justify-content: space-between; padding-right: 6px; }
.thn svg { width: 4px; height: 8px; margin-top: 4px; }
.tree td { height: 17px; padding: 0 0 2px 4px; line-height: 15px; overflow: hidden; }
.tree td:nth-child(2) { padding-left: 9px; }
.tree td:nth-child(3), .tree td:nth-child(5) { padding-left: 3px; }
.node { display: flex; align-items: center; height: 15px; }
.lv1 { padding-left: 19px; }
.lv2 { padding-left: 38px; }
.lv3 { padding-left: 57px; }
.lv4 { padding-left: 76px; }
.tg { flex: none; width: 9px; height: 9px; margin: 2px 1px 0 0; border: 1px solid #808080; background: linear-gradient(#000, #000) center / 5px 1px no-repeat; }
.tg.no { visibility: hidden; }
.fo { width: 14px; height: 12px; margin: 2px 2px 0 0; }
.cov { display: flex; align-items: center; gap: 4px; height: 15px; margin-left: -2px; }
.cov svg { width: 12px; height: 12px; }
.sel { background: #b5d9ff; outline: 1px dotted #000; outline-offset: -1px; }
.hsplit { display: flex; justify-content: center; align-items: center; gap: 2px; height: 9px; background: linear-gradient(#cbcbcb, #cbcbcb) center / 100% 3px no-repeat; }
.hsplit i { width: 3px; height: 3px; background: #7f9cbd; border: 1px solid #e8eef5; border-width: 0 1px 1px 0; }
.detail { height: 116px; padding-right: 16px; }
.dtabs { display: flex; height: 23px; gap: 2px; border-bottom: 1px solid #7793b1; }
.dtab { height: 22px; padding: 0 12px; border: 1px solid #bbb; border-bottom: 0; background: linear-gradient(#fff 0, #d4dce5 15%, #c5d0dc 40%, #edf4f8); line-height: 18px; }
.dtab.wide { padding: 0 7px; }
.dtab.on { height: 23px; background: #fff; border-color: #7793b1; border-top: 3px solid #f0a33e; line-height: 14px; }
.chev.more { margin: 2px 5px 0 auto; color: #2b5c94; }
.pane { height: 92px; padding: 5px 0 5px 5px; border: 1px solid #7793b1; border-width: 0 0 1px 1px; }
.desc { height: 81px; border: 1px solid #7793b1; border-right: 0; outline: 0; }
.appstatus { display: flex; height: 21px; padding-bottom: 3px; gap: 2px; background: #d4d0c8; }
.st { padding: 0 3px 0 2px; background: linear-gradient(#f7f7f7, #d6d6d6); border: 1px solid #7793b1; line-height: 15px; }
.st .lat { font-size: 12px; }
.st.a { width: 149px; }
.st.b { width: 200px; }
.st.fill { flex: 1; }

/* Browser status bar and taskbar */
.iestatus { display: flex; align-items: center; height: 21px; padding-top: 1px; gap: 2px; border-top: 1px solid #fff; }
.cell { display: flex; align-items: center; height: 18px; padding: 0 2px; gap: 4px; border: 1px solid; border-color: #808080 #fff #fff #808080; }
.cell.grow { flex: 1; padding-left: 0; }
.cell.sm { width: 22px; }
.cell.zone { width: 242px; gap: 2px; white-space: pre; }
.cell.lk { width: 35px; padding-left: 3px; }
.cell.zm { width: 69px; padding-left: 4px; }
.zm .caret { margin-left: 8px; }
.grip { width: 12px; height: 12px; margin-left: 3px; align-self: flex-end; }
.taskbar { position: relative; display: flex; align-items: center; height: 43px; padding: 0 2px; border-top: 1px solid #fff; }
.start { display: flex; align-items: center; gap: 1px; width: 47px; height: 38px; padding-left: 2px; border: 1px solid; border-color: #fff #404040 #404040 #fff; box-shadow: inset -1px -1px #808080; }
.start + .groove { margin: 0 8px 0 7px; }
.task { display: flex; align-items: center; justify-content: center; width: 48px; height: 38px; margin-right: 2px; }
.task.raised { border: 1px solid; border-color: #fff #404040 #404040 #fff; }
.task.active { background: #fff; border: 1px solid; border-color: #404040 #fff #fff #404040; }
.big { width: 34px; height: 32px; }
.med { width: 30px; height: 26px; }
.ime { flex: 1; display: flex; justify-content: flex-end; align-items: center; gap: 5px; margin-right: 4px; }
.ime .ch { margin: 0 1px 0 4px; font-size: 11px; }
.zh { color: #971b1b; font-size: 16px; }
.rest { width: 10px; height: 10px; margin-top: 6px; align-self: flex-start; }
.tray { display: flex; align-items: center; gap: 8px; height: 38px; padding: 0 1px 0 5px; border: 1px solid; border-color: #808080 #fff #fff #808080; }
.tray .chev { margin-left: 0; }
.clock { position: relative; z-index: 1; text-align: center; line-height: 15px; }
.desk { width: 16px; height: 14px; margin-left: -6px; }
.mark { position: absolute; right: 9px; bottom: 10px; color: rgba(255, 255, 255, .65); font: 16px/18px "Liberation Sans", sans-serif; text-shadow: 0 0 1px rgba(100, 100, 100, .6); }
```
